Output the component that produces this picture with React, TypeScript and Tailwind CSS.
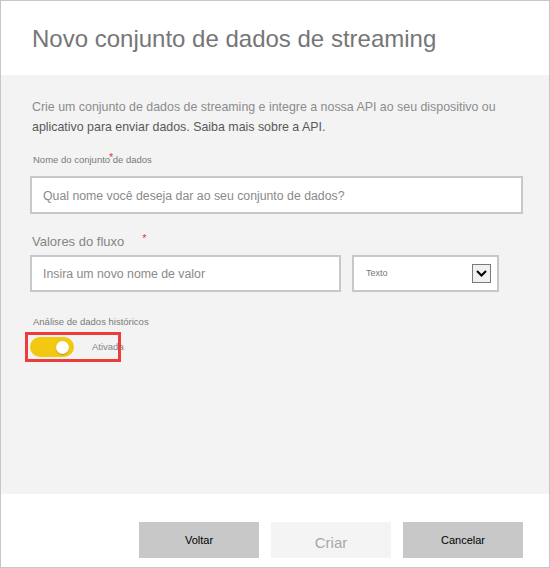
import { useState } from "react";

export default function App() {
  const [on, setOn] = useState(true);

  return (
    <div className="w-[550px] h-[568px] border border-[#c6c6c6] bg-white flex flex-col font-['Liberation_Sans',Arial,sans-serif]">
      {/* Header */}
      <div className="h-[74px] pl-[31px] pt-[24px] bg-white">
        <h1 className="text-[24px] leading-[28px] text-[#767676]">Novo conjunto de dados de streaming</h1>
      </div>

      {/* Body */}
      <div className="flex-1 bg-[#f3f3f3] pl-[29px] pr-[26px] pt-[22px]">
        <p className="pl-[2px] text-[12.4px] leading-[20px]">
          <span className="text-[#8c8c8c]">Crie um conjunto de dados de streaming e integre a nossa API ao seu dispositivo ou </span>
          <span className="text-[#585858]">aplicativo para enviar dados. Saiba mais sobre a API.</span>
        </p>

        <div className="mt-[17px] pl-[3px] text-[9.5px] leading-[12px] text-[#7a7a7a]">
          <span className="relative">
            Nome do conjunto de dados
            <span className="absolute left-[76px] -top-[3px] text-[11px] text-[#e03a44]">*</span>
          </span>
        </div>
        <div className="mt-[10px] h-[38px] border-2 border-[#c8c8c8] bg-white flex items-center pl-[11px] pt-[2px]">
          <span className="text-[12.3px] text-[#8a8a8a]">Qual nome você deseja dar ao seu conjunto de dados?</span>
        </div>

        <div className="mt-[20px] pl-[2px] text-[13px] leading-[16px] text-[#858585]">
          Valores do fluxo
          <span className="relative -top-[4px] ml-[18px] text-[11px] text-[#e03a44]">*</span>
        </div>
        <div className="mt-[5px] flex gap-[11px]">
          <div className="w-[311px] h-[37px] border-2 border-[#c8c8c8] bg-white flex items-center pl-[11px] pt-[2px]">
            <span className="text-[12.3px] text-[#8a8a8a]">Insira um novo nome de valor</span>
          </div>
          <div className="w-[147px] h-[37px] border-2 border-[#c8c8c8] bg-white flex items-center justify-between pl-[12px] pr-[6px]">
            <span className="text-[9px] text-[#777777]">Texto</span>
            <div className="w-[19px] h-[19px] border border-[#7a7a7a] bg-[#f0f0f0] flex items-center justify-center">
              <svg width="11" height="7" viewBox="0 0 11 7">
                <path d="M1 1 L5.5 5.5 L10 1" fill="none" stroke="#000" strokeWidth="2" />
              </svg>
            </div>
          </div>
        </div>

        <div className="mt-[24px] pl-[3px] text-[9.5px] leading-[12px] text-[#7a7a7a]">Análise de dados históricos</div>
        <div className="relative mt-[9px] h-[20px] flex items-center">
          <button
            onClick={() => setOn(!on)}
            className="w-[44px] h-[20px] rounded-full bg-[#f2c811] flex items-center justify-end pr-[5px]"
          >
            <span className="w-[13px] h-[13px] rounded-full bg-white shadow-[0_1px_1px_rgba(0,0,0,0.25)]" />
          </button>
          <span className="ml-[18px] text-[9.5px] text-[#858585]">Ativada</span>
          <div className="absolute -left-[5px] -top-[5px] w-[96px] h-[30px] border-[3px] border-[#ee3b3b]" />
        </div>
      </div>

      {/* Footer */}
      <div className="h-[73px] bg-white flex justify-end gap-[12px] pr-[26px] pt-[28px]">
        <button className="w-[120px] h-[36px] bg-[#c8c8c8] text-[11px] text-black">Voltar</button>
        <button className="w-[120px] h-[36px] bg-[#f4f4f4] text-[15px] text-[#a8a8a8] pt-[6px]">Criar</button>
        <button className="w-[120px] h-[36px] bg-[#c8c8c8] text-[11px] text-black">Cancelar</button>
      </div>
    </div>
  );
}
